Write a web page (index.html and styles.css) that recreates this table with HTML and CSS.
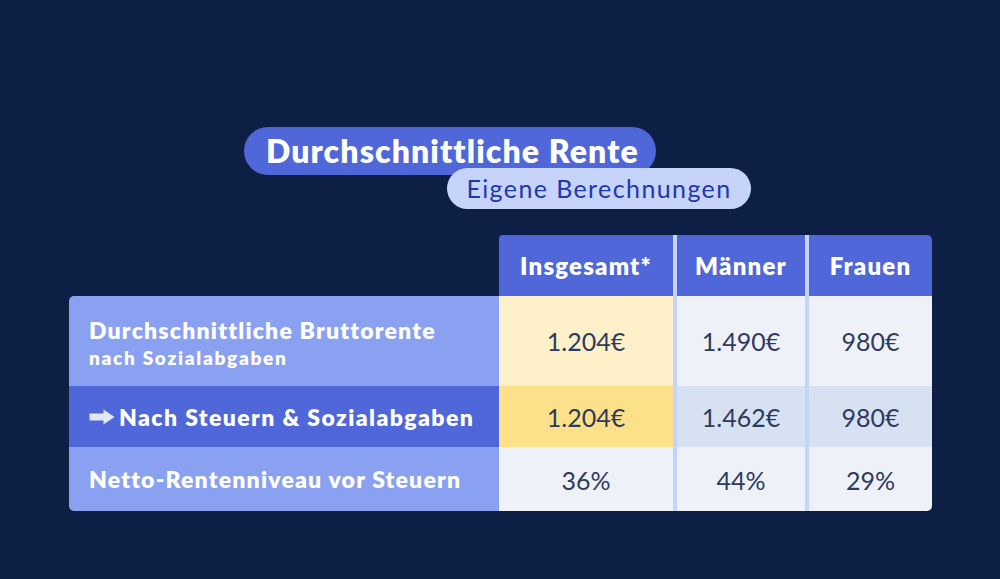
FILE: index.html
```html
<!DOCTYPE html>
<html lang="de">
<head>
<meta charset="utf-8">
<title>Durchschnittliche Rente</title>
<link rel="stylesheet" href="styles.css">
</head>
<body>
<main class="page">
  <header class="heading">
    <h1 class="title">Durchschnittliche Rente</h1>
    <p class="subtitle">Eigene Berechnungen</p>
  </header>
  <section class="table">
    <div class="cell head-empty"></div>
    <div class="cell head first-head">Insgesamt*</div>
    <div class="cell head sep">Männer</div>
    <div class="cell head sep last-head">Frauen</div>

    <div class="cell label light r1 tl">
      <span class="label-main">Durchschnittliche Bruttorente</span>
      <span class="label-sub">nach Sozialabgaben</span>
    </div>
    <div class="cell val y-light r1">1.204€</div>
    <div class="cell val grey sep r1">1.490€</div>
    <div class="cell val grey sep r1">980€</div>

    <div class="cell label dark r2">
      <svg class="arrow" viewBox="0 0 26 16" width="26" height="16" aria-hidden="true"><path d="M0.5 4.4h14V0.4L25.5 8l-11 7.6v-4H0.5z" fill="#e2e8f8"/></svg>
      <span class="label-main wide">Nach Steuern &amp; Sozialabgaben</span>
    </div>
    <div class="cell val y-strong r2">1.204€</div>
    <div class="cell val blue sep r2">1.462€</div>
    <div class="cell val blue sep r2">980€</div>

    <div class="cell label light r3 bl">
      <span class="label-main">Netto-Rentenniveau vor Steuern</span>
    </div>
    <div class="cell val grey r3">36%</div>
    <div class="cell val grey sep r3">44%</div>
    <div class="cell val grey sep r3 br">29%</div>
  </section>
</main>
</body>
</html>
```

FILE: styles.css
```css
* { box-sizing: border-box; }
html, body { margin: 0; padding: 0; }
body {
  background: #0e1f45;
  width: 1000px;
  height: 579px;
  overflow: hidden;
  font-family: "Lato", "Noto Sans", sans-serif;
}
.page {
  padding-top: 127px;
  display: flex;
  flex-direction: column;
}
.heading {
  display: flex;
  flex-direction: column;
  align-items: flex-start;
  padding-left: 244px;
}
.title {
  margin: 0;
  height: 48px;
  padding: 0 22px;
  border-radius: 24px;
  background: #4f67d9;
  color: #ffffff;
  font-size: 32px;
  font-weight: 800;
  line-height: 48px;
  letter-spacing: 1.1px;
  width: 412px;
  white-space: nowrap;
}
.subtitle {
  position: relative;
  margin: -7px 0 0 203px;
  height: 41px;
  width: 304px;
  border-radius: 21px;
  background: #c6d4fb;
  color: #2337ad;
  font-size: 25px;
  font-weight: 400;
  line-height: 41px;
  letter-spacing: 1.4px;
  text-align: center;
  white-space: nowrap;
}
.table {
  margin: 26px 0 0 69px;
  display: grid;
  grid-template-columns: 430px 174px 132px 127px;
  grid-template-rows: 61px 90px 61px 64px;
  width: 863px;
}
.cell {
  display: flex;
  align-items: center;
  justify-content: center;
  white-space: nowrap;
}
.sep { border-left: 4px solid #c6d4fb; }
.head {
  background: #4f67d9;
  color: #fff;
  font-weight: 800;
  font-size: 24px;
  letter-spacing: 1.2px;
}
.head-empty { background: transparent; }
.first-head { border-top-left-radius: 4px; }
.last-head { border-top-right-radius: 5px; }
.label {
  justify-content: flex-start;
  padding-left: 20px;
  color: #fff;
  font-weight: 800;
}
.label.r1 {
  flex-direction: column;
  align-items: flex-start;
  justify-content: center;
  padding-top: 2px;
}
.label-main { font-size: 23px; letter-spacing: 1.2px; }
.label-main.wide { letter-spacing: 1.4px; }
.label-sub { font-size: 19px; letter-spacing: 1.7px; margin-top: 2px; }
.light { background: #8aa1f1; }
.dark { background: #4f67d9; }
.tl { border-top-left-radius: 5px; }
.bl { border-bottom-left-radius: 5px; }
.br { border-bottom-right-radius: 5px; }
.arrow { margin-right: 4px; }
.val {
  color: #2f3a5f;
  font-size: 25px;
  font-weight: 400;
}
.y-light { background: #fef1ca; }
.y-strong { background: #fde18a; }
.grey { background: #eef2f8; }
.blue { background: #d6e1f2; }
.r3.val { padding-top: 2px; }
```
